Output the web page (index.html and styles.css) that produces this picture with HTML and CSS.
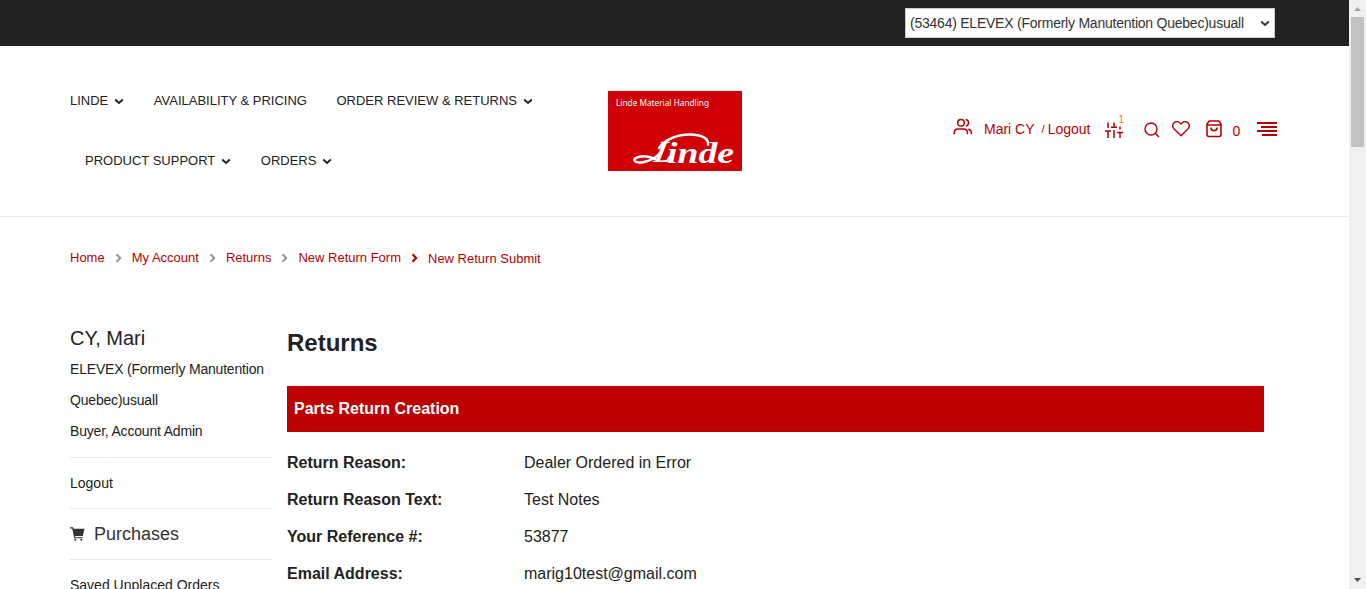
FILE: index.html
```html
<!DOCTYPE html>
<html lang="en">
<head>
<meta charset="utf-8">
<title>Returns</title>
<link rel="stylesheet" href="styles.css">
</head>
<body>
<svg class="defs" width="0" height="0">
  <symbol id="down" viewBox="0 0 10 7"><path d="M1.2 1.5 5 5l3.8-3.5" fill="none" stroke="currentColor" stroke-width="2"/></symbol>
  <symbol id="right" viewBox="0 0 7 10"><path d="M1.5 1.2 5.2 5 1.5 8.8" fill="none" stroke="currentColor" stroke-width="2.1"/></symbol>
</svg>
<div class="page">
  <div class="topbar">
    <div class="account-select"><span>(53464) ELEVEX (Formerly Manutention Quebec)usuall</span><svg class="down"><use href="#down"/></svg></div>
  </div>
  <header class="header">
    <nav class="nav">
      <div class="nav-row">
        <a>LINDE<svg class="down"><use href="#down"/></svg></a>
        <a>AVAILABILITY &amp; PRICING</a>
        <a>ORDER REVIEW &amp; RETURNS<svg class="down"><use href="#down"/></svg></a>
      </div>
      <div class="nav-row nav-row-second">
        <a>PRODUCT SUPPORT<svg class="down"><use href="#down"/></svg></a>
        <a>ORDERS<svg class="down"><use href="#down"/></svg></a>
      </div>
    </nav>
    <svg class="logo" viewBox="0 0 134 80">
      <rect width="134" height="80" fill="#d10007"/>
      <text class="logo-tag" x="8" y="15" textLength="93" lengthAdjust="spacingAndGlyphs">Linde Material Handling</text>
      <text class="logo-word" transform="translate(45 71) skewX(-14)" font-size="31" textLength="17" lengthAdjust="spacingAndGlyphs">L</text>
      <text class="logo-word" x="59" y="71.5" font-size="29" textLength="67" lengthAdjust="spacingAndGlyphs">inde</text>
      <path d="M47 68C40 64 31 64.500 27 67.500c-2.500 3 3 5 9 3.500 7-1.500 12-4.500 16-9" fill="none" stroke="#fff" stroke-width="2.500" stroke-linecap="round"/>
      <path d="M51 57C57 48 70 43.500 82 43.500c12 0 19 4.500 18 10" fill="none" stroke="#fff" stroke-width="2.500" stroke-linecap="round"/>
    </svg>
    <div class="tools">
      <svg class="users" viewBox="0 0 20 18"><g fill="none" stroke="currentColor" stroke-width="1.5"><circle cx="8" cy="4.7" r="3.3"/><path d="M1.2 16.2v-1.5c0-2.2 1.5-3.7 3.8-3.7h5.6c2.3 0 3.8 1.5 3.8 3.7v1.5M12.8 1.5c3.7.6 3.7 5.8 0 6.400M15.2 11.2c2.2.5 3.2 1.8 3.2 3.8v1.2"/></g></svg>
      <a class="user">Mari CY</a><span class="slash">/</span><a>Logout</a>
      <div class="compare">
        <svg viewBox="0 0 18 16"><path d="M3 .5v5.500M3 9v7M0 9h6M9 .5v4.700M6 5.200h6M9 8v8M15 4.500v3M12 10.500h6M15 10.500V16" fill="none" stroke="currentColor" stroke-width="1.5"/></svg>
        <span>1</span>
      </div>
      <svg class="search" viewBox="0 0 16 16"><path d="M11.7 11.7 15 15" stroke="currentColor" stroke-width="1.6"/><circle cx="7" cy="7" r="6" fill="none" stroke="currentColor" stroke-width="1.4"/></svg>
      <svg class="heart" viewBox="0 0 18 16"><path d="M9 14.800 2.100 8C-1.800 3.800 4-2.200 8 2l1 1 1-1c4-4.200 9.800 1.800 5.900 6z" fill="none" stroke="currentColor" stroke-width="1.4"/></svg>
      <svg class="bag" viewBox="0 0 16 18"><path d="m1 4 2.200-3h9.600L15 4v10.500q0 2-2 2H3q-2 0-2-2zM1 5h14M4.800 7.500c.3 4.200 6.100 4.200 6.400 0" fill="none" stroke="currentColor" stroke-width="1.6"/></svg>
      <span class="count">0</span>
      <svg class="menu" viewBox="0 0 20 14"><path d="M0 1h20M4 5h16M0 9h20M5 13h15" stroke="currentColor" stroke-width="2"/></svg>
    </div>
  </header>
  <div class="breadcrumbs">
    <a>Home</a><svg class="right"><use href="#right"/></svg>
    <a>My Account</a><svg class="right"><use href="#right"/></svg>
    <a>Returns</a><svg class="right"><use href="#right"/></svg>
    <a>New Return Form</a><svg class="right right-last"><use href="#right"/></svg>
    <a class="current">New Return Submit</a>
  </div>
  <div class="content">
    <aside class="sidebar">
      <div class="name">CY, Mari</div>
      <div class="company">ELEVEX (Formerly Manutention<br>Quebec)usuall<br>Buyer, Account Admin</div>
      <div class="item">Logout</div>
      <div class="item item-title"><svg viewBox="0 0 15 14"><path d="M0 .3h3l.7 1.500H14.500L12.800 9H5l.3 1.200h7.500v1H4.300L2.200 1.500H0z" fill="#333"/><circle cx="5.2" cy="12.700" r="1" fill="#333"/><circle cx="11.300" cy="12.700" r="1" fill="#333"/></svg>Purchases</div>
      <div class="item">Saved Unplaced Orders</div>
    </aside>
    <main class="main">
      <h1>Returns</h1>
      <h2>Parts Return Creation</h2>
      <dl>
        <dt>Return Reason:</dt><dd>Dealer Ordered in Error</dd>
        <dt>Return Reason Text:</dt><dd>Test Notes</dd>
        <dt>Your Reference #:</dt><dd>53877</dd>
        <dt>Email Address:</dt><dd>marig10test@gmail.com</dd>
      </dl>
    </main>
  </div>
</div>
<div class="scrollbar">
  <svg viewBox="0 0 7 4"><path d="M0 4h7L3.5 0z" fill="#a3a3a3"/></svg>
  <div class="thumb"></div>
  <svg class="arrow-down" viewBox="0 0 7 4"><path d="M0 0h7L3.5 4z" fill="#505050"/></svg>
</div>
</body>
</html>
```
FILE: styles.css
```css
* { box-sizing: border-box; }
body {
  margin: 0;
  height: 589px;
  display: flex;
  overflow: hidden;
  background: #fff;
  color: #222;
  font: 14px/20px "Liberation Sans", Arial, sans-serif;
}
svg { display: block; flex: none; }
.defs { display: none; }
.page { width: 1349px; height: 589px; overflow: hidden; flex: none; }
.down { width: 10px; height: 7px; }

.topbar {
  height: 46px;
  background: #222;
  display: flex;
  justify-content: flex-end;
  padding: 8px 74px 0 0;
}
.account-select {
  width: 370px;
  height: 30px;
  border: 1px solid #ccc;
  background: #fff;
  color: #333;
  display: flex;
  align-items: center;
  justify-content: space-between;
  padding: 0 4px;
  letter-spacing: -0.235px;
  white-space: nowrap;
}

.header {
  height: 171px;
  border-bottom: 1px solid #e9e9e9;
  padding-left: 70px;
  display: flex;
  align-items: flex-start;
}
.nav { width: 538px; padding-top: 45px; font-size: 13px; }
.nav-row { display: flex; gap: 29.5px; height: 60px; white-space: nowrap; }
.nav-row-second { padding-left: 15px; }
.nav a { display: flex; height: 20px; align-items: center; gap: 6px; }
.logo { width: 134px; height: 80px; margin-top: 45px; }
.logo-tag { font: 9px "Noto Sans", sans-serif; fill: #fff; }
.logo-word { font-family: "Liberation Serif", serif; font-weight: bold; font-style: italic; fill: #fff; }
.tools {
  display: flex;
  align-items: flex-start;
  padding: 73px 0 0 211px;
  color: #b90000;
  white-space: nowrap;
}
.users { width: 20px; height: 18px; margin-top: -1px; }
.user { margin-left: 11px; }
.slash { font-size: 11px; margin: 0 3px 0 7px; }
.compare { position: relative; margin: 3px 0 0 15px; }
.compare svg { width: 18px; height: 16px; }
.compare span {
  position: absolute;
  left: 13px;
  top: -8px;
  font-size: 10px;
  line-height: 12px;
  color: #f08000;
}
.search { width: 16px; height: 16px; margin: 3px 0 0 21px; }
.heart { width: 18px; height: 16px; margin: 2px 0 0 12px; }
.bag { width: 16px; height: 18px; margin: 1px 0 0 16px; }
.count { margin: 2px 0 0 10px; }
.menu { width: 20px; height: 14px; margin: 3px 0 0 17px; }

.breadcrumbs {
  display: flex;
  padding: 31px 0 0 70px;
  height: 109px;
  font-size: 13px;
  color: #b90000;
  white-space: nowrap;
}
.right { width: 7px; height: 10px; margin: 5px 10px 0; color: #999; }
.right-last { color: #b90000; }
.current { margin-top: 1px; }

.content { display: flex; padding-left: 70px; }
.sidebar { width: 202px; }
.name { font-size: 20px; line-height: 24px; }
.company { line-height: 31px; margin-top: 4px; height: 103px; letter-spacing: -0.19px; white-space: nowrap; }
.item { height: 51px; border-top: 1px solid #e9e9e9; line-height: 50px; }
.item-title { display: flex; align-items: center; font-size: 18px; color: #333; }
.item-title svg { width: 15px; height: 14px; margin-right: 9px; }
.main { width: 977px; margin-left: 15px; font-size: 16px; }
h1 { margin: 3px 0 29px; font-size: 24px; line-height: 28px; }
h2 { margin: 0 0 12px; height: 46px; background: #bd0000; color: #fff; font-size: 16px; line-height: 45px; padding-left: 7px; }
dl { margin: 0; display: grid; grid-template-columns: 237px 1fr; grid-auto-rows: 37px; line-height: 37px; }
dt { font-weight: bold; }
dd { margin: 0; }

.scrollbar {
  width: 17px;
  height: 589px;
  background: #f0f0f0;
  display: flex;
  flex-direction: column;
  align-items: center;
  padding: 7px 0;
}
.scrollbar svg { width: 7px; height: 4px; }
.thumb { width: 13px; height: 130px; margin: 6px 0 0; background: #c1c1c1; }
.scrollbar .arrow-down { margin-top: auto; }
```
